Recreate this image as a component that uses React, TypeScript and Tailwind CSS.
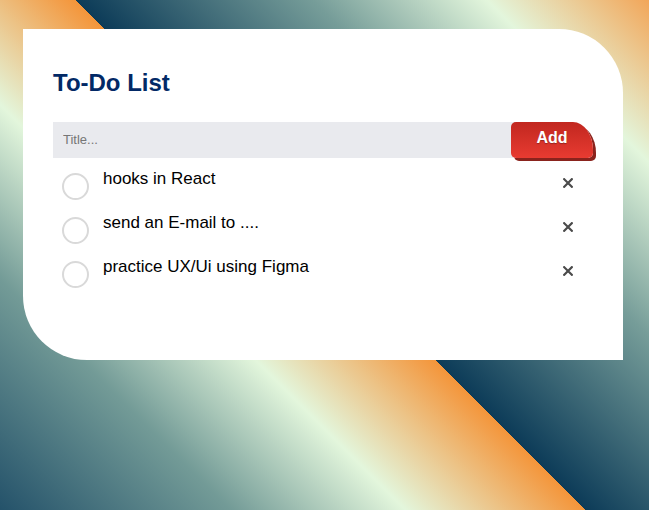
import { useState } from "react";

type Task = {
  id: number;
  title: string;
  done: boolean;
};

const INITIAL_TASKS: Task[] = [
  { id: 1, title: "hooks in React", done: false },
  { id: 2, title: "send an E-mail to ....", done: false },
  { id: 3, title: "practice UX/Ui using Figma", done: false },
];

function CloseIcon() {
  return (
    <svg width="10" height="10" viewBox="0 0 10 10" aria-hidden="true">
      <path d="M1.2 1.2 L8.8 8.8 M8.8 1.2 L1.2 8.8" stroke="#4b4b4b" strokeWidth="2.2" strokeLinecap="square" />
    </svg>
  );
}

export default function App() {
  const [tasks, setTasks] = useState<Task[]>(INITIAL_TASKS);
  const [title, setTitle] = useState("");

  function addTask() {
    const value = title.trim();
    if (!value) {
      return;
    }
    setTasks((current) => [...current, { id: Date.now(), title: value, done: false }]);
    setTitle("");
  }

  function toggleTask(id: number) {
    setTasks((current) => current.map((task) => (task.id === id ? { ...task, done: !task.done } : task)));
  }

  function removeTask(id: number) {
    setTasks((current) => current.filter((task) => task.id !== id));
  }

  return (
    <main className="min-h-[510px] w-full overflow-hidden bg-[linear-gradient(45deg,#24526a_0%,#739b97_20%,#e3f6dc_35%,#f4953a_50.5%,#0c3b58_50.5%,#769d99_71%,#e3f6dc_86%,#f2a659_100%)] pl-[23px] pt-[29px] font-['Liberation_Sans',Arial,sans-serif]">
      <section className="h-[331px] w-[600px] rounded-bl-[64px] rounded-tr-[64px] bg-white px-[30px] pt-[40px]">
        <h2 className="text-[24px] leading-[28px] font-bold text-[#022966]">To-Do List</h2>

        <div className="mt-[25px] flex h-[36px] items-stretch">
          <input
            value={title}
            onChange={(event) => setTitle(event.target.value)}
            onKeyDown={(event) => {
              if (event.key === "Enter") addTask();
            }}
            placeholder="Title..."
            className="min-w-0 flex-1 bg-[#e9eaee] pl-[10px] text-[13px] text-[#333] outline-none placeholder:text-[#767676]"
          />
          <button
            type="button"
            onClick={addTask}
            className="-ml-[4px] w-[82px] rounded-tl-[5px] rounded-tr-[20px_28px] rounded-b-[5px] bg-[linear-gradient(180deg,#c1271f,#e83b31)] pb-[4px] text-[16px] font-bold text-white shadow-[3px_3px_0_#8a231d] [text-shadow:0_1px_1px_rgba(0,0,0,0.3)]"
          >
            Add
          </button>
        </div>

        <ul className="mt-[11px]">
          {tasks.map((task) => (
            <li key={task.id} className="flex h-[44px] items-start">
              <button
                type="button"
                onClick={() => toggleTask(task.id)}
                className={`ml-[9px] mt-[3.5px] h-[27px] w-[27px] shrink-0 rounded-full border-2 ${task.done ? "border-[#e5392f] bg-[#e5392f]" : "border-[#d9d9d9]"}`}
              />
              <span
                className={`ml-[14px] flex-1 text-[17px] leading-[20px] ${task.done ? "text-[#888] line-through" : "text-black"}`}
              >
                {task.title}
              </span>
              <button type="button" onClick={() => removeTask(task.id)} className="mr-[20px] mt-[8.7px] flex h-[10px] w-[10px]">
                <CloseIcon />
              </button>
            </li>
          ))}
        </ul>
      </section>
    </main>
  );
}
